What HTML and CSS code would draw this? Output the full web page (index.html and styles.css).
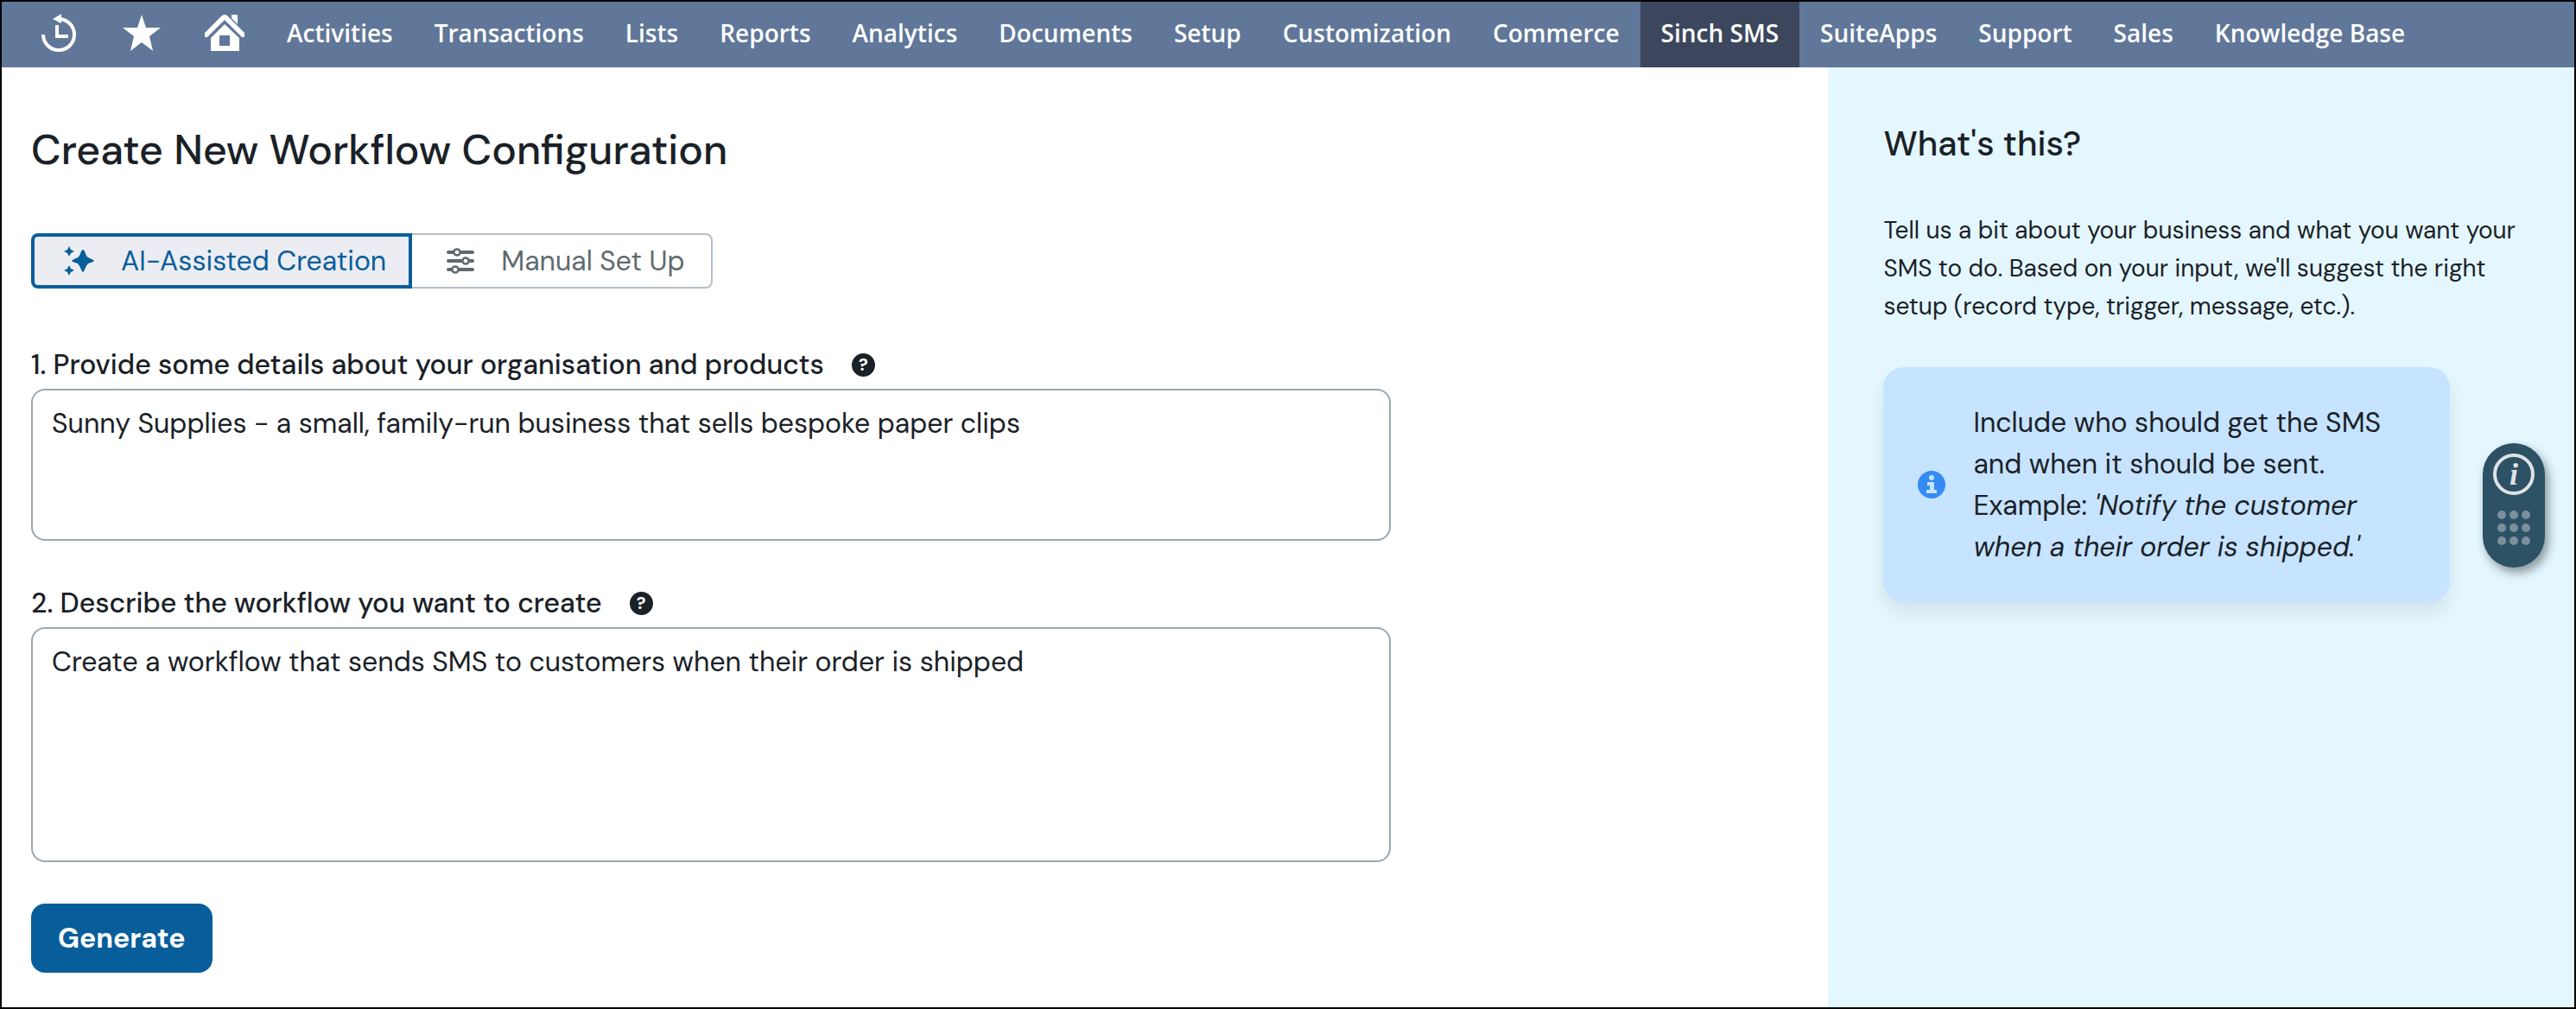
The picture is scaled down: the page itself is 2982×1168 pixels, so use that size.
FILE: index.html
```
<!DOCTYPE html>
<html lang="en">
<head>
    <meta charset="UTF-8">
    <title>Create New Workflow Configuration</title>
    <link rel="stylesheet" href="styles.css">
</head>
<body>
    <nav class="navbar">
        <a href="#" class="nav-icon" aria-label="Recent records">
            <svg width="40" height="44" viewBox="0 0 40 44" fill="none" stroke="#fff" stroke-width="4">
                <path d="M2 24 A18 18 0 1 0 20 6"/>
                <path d="M18 13 V26 H31"/>
                <path d="M13 6 L23 0 V11 Z" fill="#fff" stroke="none"/>
            </svg>
        </a>
        <a href="#" class="nav-icon" aria-label="Shortcuts">
            <svg width="44" height="42" viewBox="0 0 44 42" fill="#fff">
                <path d="M22 0 L27 15 H44 L31 25 L35 42 L22 32 L9 42 L13 25 L0 15 H17 Z"/>
            </svg>
        </a>
        <a href="#" class="nav-icon" aria-label="Home">
            <svg width="46" height="42" viewBox="0 0 46 42" fill="#fff">
                <path d="M20 1 Q23 -1 26 1 L46 21 V26 H43 L23 6 L3 26 H0 V21 Z"/>
                <path d="M31 0 H38 V11 L31 4 Z"/>
                <path fill-rule="evenodd" d="M23 11 L40 27 V42 H7 V27 Z M17 24 V36 H29 V24 Z"/>
            </svg>
        </a>
        <a href="#" class="nav-link">Activities</a>
        <a href="#" class="nav-link">Transactions</a>
        <a href="#" class="nav-link">Lists</a>
        <a href="#" class="nav-link">Reports</a>
        <a href="#" class="nav-link">Analytics</a>
        <a href="#" class="nav-link">Documents</a>
        <a href="#" class="nav-link">Setup</a>
        <a href="#" class="nav-link">Customization</a>
        <a href="#" class="nav-link">Commerce</a>
        <a href="#" class="nav-link active">Sinch SMS</a>
        <a href="#" class="nav-link">SuiteApps</a>
        <a href="#" class="nav-link">Support</a>
        <a href="#" class="nav-link">Sales</a>
        <a href="#" class="nav-link">Knowledge Base</a>
    </nav>

    <div class="content">
        <main class="main">
            <h1>Create New Workflow Configuration</h1>

            <div class="tabs">
                <button type="button" class="tab selected">
                    <svg width="35" height="34" viewBox="0 0 35 34" fill="currentColor">
                        <path d="M22 4 Q23 4 24 6 Q26 12 28 13 Q35 16 35 17 Q35 18 28 20 Q26 22 24 27 Q23 30 22 30 Q21 30 20 27 Q18 22 16 20 Q9 18 9 17 Q9 16 16 13 Q18 12 20 6 Q21 4 22 4 Z"/>
                        <path d="M6 0 L8 4 L12 6 L8 8 L6 12 L4 8 L0 6 L4 4 Z"/>
                        <path d="M6 22 L8 26 L12 28 L8 30 L6 34 L4 30 L0 28 L4 26 Z"/>
                    </svg>
                    AI-Assisted Creation
                </button>
                <button type="button" class="tab">
                    <svg width="32" height="32" viewBox="0 0 32 32" fill="#fff" stroke="currentColor" stroke-width="4" stroke-linecap="round">
                        <path d="M2 6 H30 M2 16 H30 M2 26 H30"/>
                        <g stroke-width="2.5">
                            <circle cx="12" cy="6" r="3.6"/>
                            <circle cx="22" cy="16" r="3.6"/>
                            <circle cx="10" cy="26" r="3.6"/>
                        </g>
                    </svg>
                    Manual Set Up
                </button>
            </div>

            <form class="form">
                <div class="field">
                    <div class="field-label">
                        <label for="details">1. Provide some details about your organisation and products</label>
                        <button type="button" class="help" aria-label="Help">?</button>
                    </div>
                    <textarea id="details" class="details">Sunny Supplies - a small, family-run business that sells bespoke paper clips</textarea>
                </div>

                <div class="field">
                    <div class="field-label">
                        <label for="workflow">2. Describe the workflow you want to create</label>
                        <button type="button" class="help" aria-label="Help">?</button>
                    </div>
                    <textarea id="workflow" class="workflow">Create a workflow that sends SMS to customers when their order is shipped</textarea>
                </div>

                <button type="button" class="generate">Generate</button>
            </form>
        </main>

        <aside class="sidebar">
            <h2>What's this?</h2>
            <p>Tell us a bit about your business and what you want your<br>
                SMS to do. Based on your input, we'll suggest the right<br>
                setup (record type, trigger, message, etc.).</p>

            <div class="tip">
                <svg class="tip-icon" width="32" height="32" viewBox="0 0 32 32">
                    <circle cx="16" cy="16" r="16" fill="#338bf3"/>
                    <circle cx="16" cy="8" r="3" fill="#c6e3ff"/>
                    <path d="M11 13 H19 V22 H22 V26 H10 V22 H14 V17 H11 Z" fill="#c6e3ff"/>
                </svg>
                <div>Include who should get the SMS<br>
                    and when it should be sent.<br>
                    Example: <em>'Notify the customer<br>
                    when a their order is shipped.'</em></div>
            </div>
        </aside>
    </div>

    <!-- floating help widget -->
    <div class="widget">
        <button type="button" class="widget-info" aria-label="Information">i</button>
        <svg width="40" height="42" viewBox="0 0 40 42" fill="#7b909c">
            <circle cx="6" cy="6" r="5"/><circle cx="20" cy="6" r="5"/><circle cx="34" cy="6" r="5"/>
            <circle cx="6" cy="21" r="5"/><circle cx="20" cy="21" r="5"/><circle cx="34" cy="21" r="5"/>
            <circle cx="6" cy="36" r="5"/><circle cx="20" cy="36" r="5"/><circle cx="34" cy="36" r="5"/>
        </svg>
    </div>
</body>
</html>
```
FILE: styles.css
```
* {
    box-sizing: border-box;
}
body {
    margin: 0;
    min-height: 100vh;
    display: flex;
    flex-direction: column;
    border: 2px solid #000;
    background: #fff;
    color: #1a2127;
    font-family: "DM Sans", Inter, sans-serif;
}
button, textarea {
    font-family: inherit;
    color: inherit;
}

/* top navigation */
.navbar {
    display: flex;
    align-items: stretch;
    height: 76px;
    padding-left: 18px;
    background: #607799;
}
.nav-icon {
    display: flex;
    align-items: center;
    justify-content: center;
    width: 96px;
    padding-bottom: 4px;
}
.nav-link {
    display: flex;
    align-items: center;
    padding: 0 24px 4px;
    color: #fff;
    font-family: "Open Sans", sans-serif;
    font-size: 28px;
    font-weight: 600;
    text-decoration: none;
    white-space: nowrap;
}
.nav-link.active {
    background: #3c475d;
}

.content {
    flex: 1;
    display: flex;
}

/* left side */
.main {
    flex: 1;
    padding: 60px 34px 40px;
}
h1 {
    margin: 0 0 60px;
    font-size: 48px;
    font-weight: 500;
    line-height: 72px;
}
.tabs {
    display: flex;
    height: 64px;
    margin-bottom: 64px;
}
.tab {
    display: flex;
    align-items: center;
    gap: 31px;
    padding: 0 30px 0 40px;
    border: 2px solid #b4bec6;
    border-left: 0;
    border-radius: 0 8px 8px 0;
    background: #fff;
    color: #5f6a6f;
    font-size: 32px;
    white-space: nowrap;
}
.tab.selected {
    padding: 0 26px 0 34px;
    border: 4px solid #085e9b;
    border-radius: 8px 0 0 8px;
    background: #ecedf2;
    color: #085e9b;
}
.form {
    width: 1574px;
    max-width: 100%;
}
.field {
    margin-bottom: 48px;
}
.field-label {
    display: flex;
    align-items: center;
    gap: 32px;
    height: 52px;
    padding-bottom: 4px;
    font-size: 32px;
    font-weight: 500;
}
.help {
    width: 27px;
    height: 27px;
    padding: 0;
    border: 0;
    border-radius: 50%;
    background: #1a2127;
    color: #fff;
    font-size: 20px;
    font-weight: 800;
    line-height: 27px;
}
textarea {
    display: block;
    width: 100%;
    padding: 17px 22px;
    border: 2px solid #9ba7b0;
    border-radius: 16px;
    background: #fff;
    font-size: 32px;
    line-height: 42px;
    resize: none;
}
.details {
    height: 176px;
}
.workflow {
    height: 272px;
}
.generate {
    height: 80px;
    padding: 0 31px;
    border: 0;
    border-radius: 16px;
    background: #085e9b;
    color: #fff;
    font-size: 32px;
    font-weight: 700;
}

/* right side */
.sidebar {
    width: 29%;
    padding: 60px 64px;
    background: #e4f7ff;
}
h2 {
    margin: 0 0 51px;
    font-size: 40px;
    font-weight: 500;
    line-height: 56px;
}
.sidebar p {
    margin: 0 0 48px;
    font-size: 28px;
    line-height: 44px;
}
.tip {
    display: flex;
    align-items: center;
    gap: 32px;
    max-width: 656px;
    padding: 40px;
    border-radius: 24px;
    background: #c6e3ff;
    box-shadow: 0 12px 20px rgba(0, 0, 0, .08);
    font-size: 32px;
    line-height: 48px;
    white-space: nowrap;
}
.tip-icon {
    flex: none;
}

.widget {
    position: absolute;
    top: 513px;
    right: 36px;
    display: flex;
    flex-direction: column;
    align-items: center;
    gap: 17px;
    width: 72px;
    height: 144px;
    padding-top: 12px;
    border-radius: 36px;
    background: #2d5165;
    box-shadow: 4px 6px 12px rgba(0, 0, 0, .4);
}
.widget-info {
    width: 48px;
    height: 48px;
    padding: 0;
    border: 4px solid #dfe3e5;
    border-radius: 50%;
    background: none;
    color: #dfe3e5;
    font: italic bold 36px/36px "Liberation Serif", serif;
}
```
